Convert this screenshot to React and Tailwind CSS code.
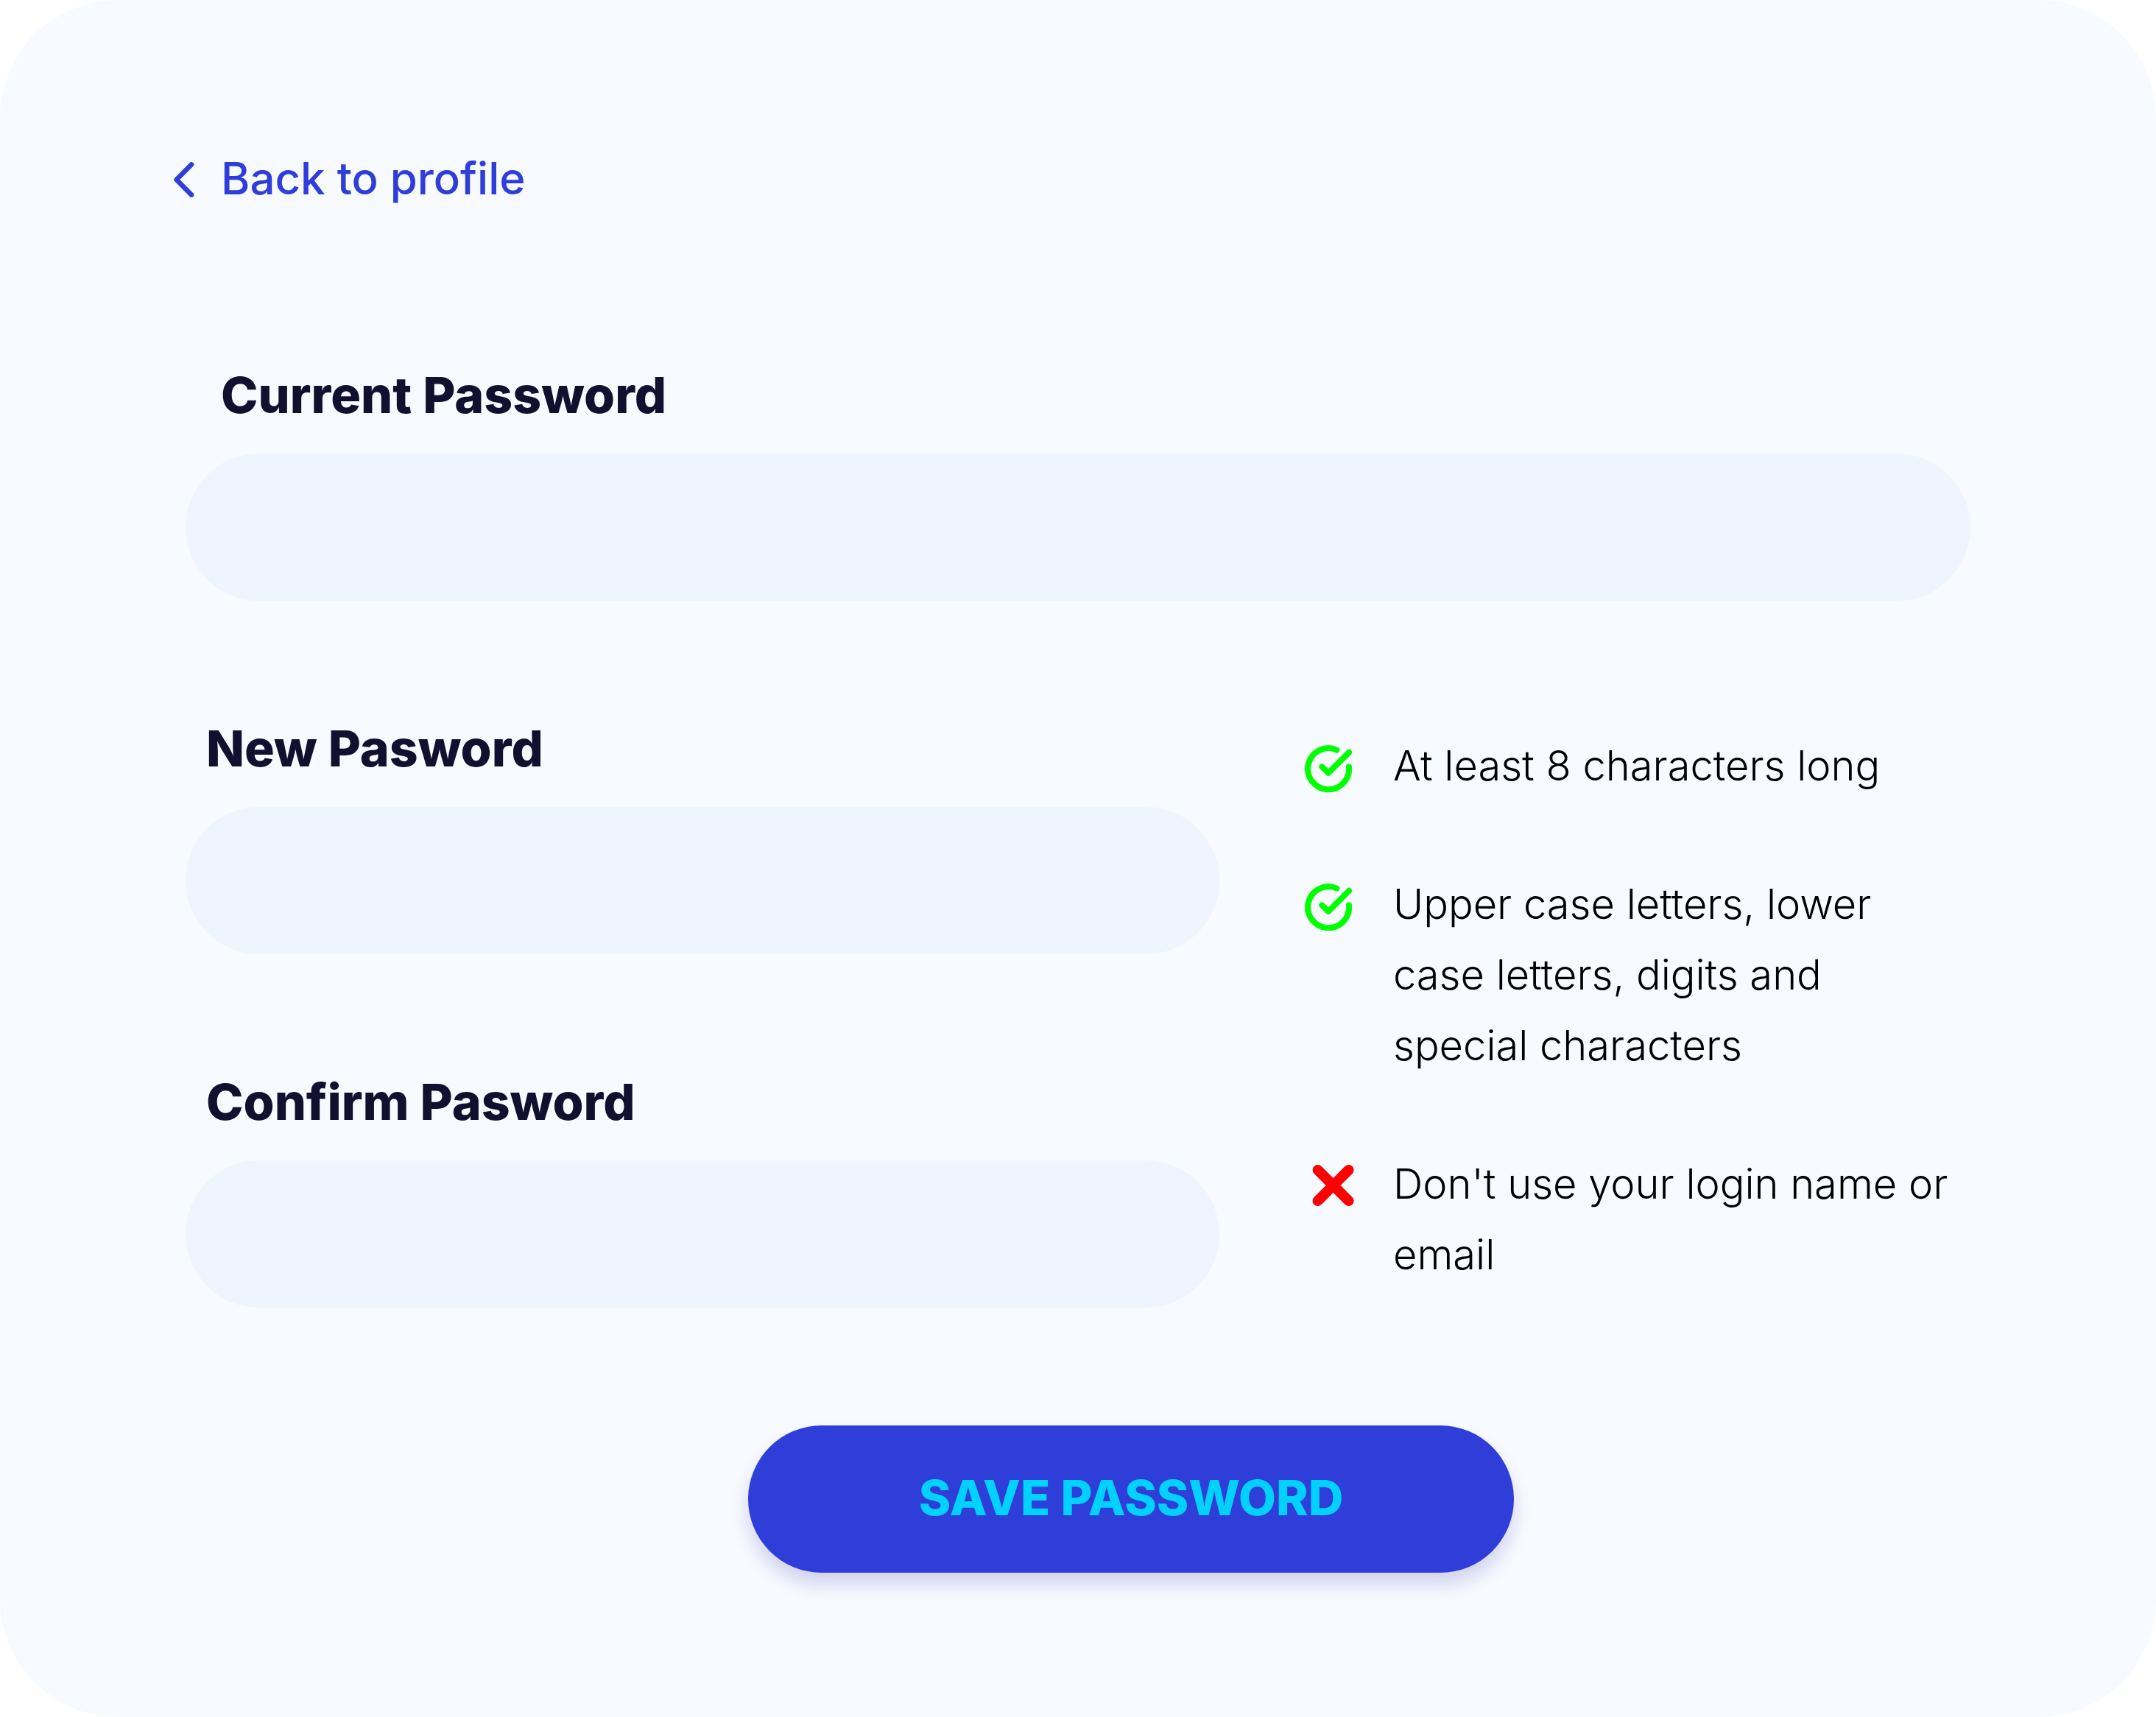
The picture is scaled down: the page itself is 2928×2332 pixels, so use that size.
import React from "react";

const rules = [
  { ok: true, text: "At least 8 characters long" },
  { ok: true, text: "Upper case letters, lower case letters, digits and special characters" },
  { ok: false, text: "Don't use your login name or email" },
];

function CheckIcon() {
  return (
    <svg className="size-16 shrink-0" viewBox="0 0 64 64" fill="none" stroke="#00ff00" strokeWidth="8" strokeLinecap="round" strokeLinejoin="round" aria-hidden="true">
      <path d="M43.4 6.6A28 28 0 1 0 60 29.4" />
      <path d="M23.4 29.4L32 37.8L60 9.8" />
    </svg>
  );
}

function CrossIcon() {
  return (
    <svg className="size-16 shrink-0 overflow-visible" viewBox="0 0 64 64" fill="none" stroke="#ff0000" strokeWidth="14" strokeLinecap="round" aria-hidden="true">
      <path d="M17.6 13L59.6 55M59.6 13L17.6 55" />
    </svg>
  );
}

function Field({ id, label, labelClass }) {
  return (
    <div className="flex flex-col gap-10">
      <label htmlFor={id} className={`text-[68px] leading-20 font-extrabold ${labelClass}`}>
        {label}
      </label>
      <input id={id} type="password" className="h-50 w-full rounded-full bg-[#eef5ff] px-20 text-[60px] outline-none" />
    </div>
  );
}

export default function App() {
  return (
    <main className="min-h-screen rounded-[160px] bg-[#f7faff] px-63 pt-48 pb-49 font-['Inter',sans-serif] text-[#130f2f]">
      <a href="#profile" className="-ml-4 flex w-fit items-center gap-9 text-[60px] leading-25 font-medium text-[#2f3ed9]">
        <svg className="h-12 w-7" viewBox="0 0 28 48" fill="none" stroke="currentColor" strokeWidth="6.6" strokeLinecap="round" strokeLinejoin="round" aria-hidden="true">
          <path d="M24 3.4L3.6 24L24 44.6" />
        </svg>
        <span className="pb-1">Back to profile</span>
      </a>
      <form className="mt-50" onSubmit={(e) => e.preventDefault()}>
        <Field id="current" label="Current Password" labelClass="pl-12" />
        <div className="mt-40 flex gap-29">
          <div className="flex flex-1 flex-col gap-40">
            <Field id="new" label="New Pasword" labelClass="pl-7" />
            <Field id="confirm" label="Confirm Pasword" labelClass="pl-7" />
          </div>
          <ul className="flex w-226 flex-col gap-23 pt-4 pr-5 text-[56px] leading-24 font-light text-black">
            {rules.map((r) => (
              <li key={r.text} className="flex gap-14">
                <span className={r.ok ? "flex h-24 items-center pt-2" : "flex h-24 items-center"}>
                  {r.ok ? <CheckIcon /> : <CrossIcon />}
                </span>
                <span>{r.text}</span>
              </li>
            ))}
          </ul>
        </div>
        <div className="mt-40 flex justify-center pl-36">
          <button type="submit" className="h-50 w-260 rounded-full bg-[#2f3ed9] pb-1 text-[66px] font-extrabold text-[#00d1ff] shadow-[0_16px_24px_rgba(19,15,150,0.16)]">
            SAVE PASSWORD
          </button>
        </div>
      </form>
    </main>
  );
}
